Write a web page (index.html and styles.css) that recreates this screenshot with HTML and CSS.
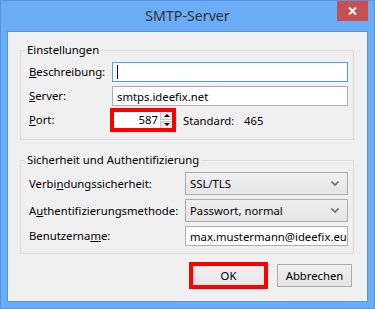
FILE: index.html
```html
<!DOCTYPE html>
<html lang="de">
  <head>
    <meta charset="UTF-8" />
    <title>SMTP-Server</title>
    <link rel="stylesheet" href="styles.css">
  </head>
  <body>
    <div class="window">
      <div class="titlebar">
        <span class="title">SMTP-Server</span>
        <button class="close" title="Schließen">
          <svg width="9" height="8" viewBox="0 0 9 8">
            <path d="M1 0.5 L8 7.5 M8 0.5 L1 7.5" stroke="#fff" stroke-width="2" />
          </svg>
        </button>
      </div>

      <div class="client">
        <!-- Einstellungen -->
        <fieldset class="group">
          <legend>Einstellungen</legend>
          <div class="form form-general">
            <label><u>B</u>eschreibung:</label>
            <div class="field focused"><span class="caret"></span></div>

            <label><u>S</u>erver:</label>
            <div class="field">smtps.ideefix.net</div>

            <label><u>P</u>ort:</label>
            <div class="port-row">
              <div class="port highlight">
                <div class="port-input">587</div>
                <div class="spinner">
                  <span class="spin-btn"><span class="arrow-up"></span></span>
                  <span class="spin-btn"><span class="arrow-down"></span></span>
                </div>
              </div>
              <span class="std-label">Standard:</span>
              <span>465</span>
            </div>
          </div>
        </fieldset>

        <!-- Sicherheit -->
        <fieldset class="group group-security">
          <legend>Sicherheit und Authentifizierung</legend>
          <div class="form form-security">
            <label>Verbi<u>n</u>dungssicherheit:</label>
            <div class="combo">
              <span>SSL/TLS</span>
              <svg width="8" height="5" viewBox="0 0 8 5">
                <path d="M0.5 0.5 L4 4 L7.5 0.5" fill="none" stroke="#6d6d6d" stroke-width="1.6" />
              </svg>
            </div>

            <label>A<u>u</u>thentifizierungsmethode:</label>
            <div class="combo">
              <span>Passwort, normal</span>
              <svg width="8" height="5" viewBox="0 0 8 5">
                <path d="M0.5 0.5 L4 4 L7.5 0.5" fill="none" stroke="#6d6d6d" stroke-width="1.6" />
              </svg>
            </div>

            <label>Benutzerna<u>m</u>e:</label>
            <div class="field">max.mustermann@ideefix.eu</div>
          </div>
        </fieldset>

        <div class="buttons">
          <button class="btn highlight">OK</button>
          <button class="btn">Abbrechen</button>
        </div>
      </div>
    </div>
  </body>
</html>
```

FILE: styles.css
```css
/* Basic page styling */
body {
  margin: 0;
  font-family: "Segoe UI", "Noto Sans", "Open Sans", sans-serif;
  font-size: 11.3px;
  color: #000;
}

/* Window frame */
.window {
  width: 375px;
  height: 309px;
  box-sizing: border-box;
  background-color: #6aacf5;
  border: 1px solid #5494e0;
  display: flex;
  flex-direction: column;
}

.titlebar {
  height: 30px;
  position: relative;
  display: flex;
  align-items: center;
  justify-content: center;
}

.title {
  font-size: 14.2px;
  color: #333;
  line-height: 20px;
  margin-top: -1px;
}

.close {
  position: absolute;
  top: 0;
  right: 6px;
  width: 31px;
  height: 20px;
  padding: 0;
  border: 0;
  background-color: #c75050;
  display: flex;
  align-items: center;
  justify-content: center;
}

/* Client area */
.client {
  flex: 1;
  margin: 0 6px 6px;
  background-color: #f0f0f0;
  border: 1px solid #5a92d6;
}

/* Group boxes */
.group {
  margin: 10px 13px 0 12px;
  padding: 4px 5px 9px 8px;
  border: 1px solid #dcdcdc;
  min-width: 0;
}

.group legend {
  margin-left: -4px;
  padding: 0 2px;
  line-height: 16px;
}

.group-security {
  margin-top: 12px;
  padding-bottom: 7px;
}

/* Form rows */
.form {
  display: grid;
  grid-template-columns: 83px 1fr;
  row-gap: 4px;
  align-items: center;
}

.form-security {
  grid-template-columns: 156px 1fr;
  grid-template-rows: 23px 23px 20px;
}

.form label {
  line-height: 16px;
  white-space: nowrap;
}

.field {
  height: 20px;
  box-sizing: border-box;
  border: 1px solid #abadb3;
  background-color: #fff;
  padding: 0 4px;
  line-height: 17px;
  white-space: nowrap;
  overflow: hidden;
  display: flex;
  align-items: center;
}

.field.focused {
  border-color: #569de5;
}

.caret {
  width: 1px;
  height: 14px;
  background-color: #000;
}

/* Port with spinner */
.port-row {
  display: flex;
  align-items: center;
  height: 20px;
}

.port {
  display: flex;
  height: 20px;
  width: 62px;
  box-sizing: border-box;
  border: 1px solid #abadb3;
  background-color: #fff;
}

.port-input {
  flex: 1;
  text-align: right;
  padding-right: 2px;
  line-height: 18px;
}

.spinner {
  width: 13px;
  display: flex;
  flex-direction: column;
  gap: 1px;
}

.spin-btn {
  flex: 1;
  background-color: #e8e8e8;
  border: 1px solid #c4c4c4;
  display: flex;
  align-items: center;
  justify-content: center;
}

.arrow-up,
.arrow-down {
  width: 0;
  height: 0;
  border-left: 3px solid transparent;
  border-right: 3px solid transparent;
}

.arrow-up {
  border-bottom: 3px solid #000;
}

.arrow-down {
  border-top: 3px solid #000;
}

.std-label {
  margin-left: 9px;
  width: 61px;
}

/* Combo boxes */
.combo {
  height: 23px;
  box-sizing: border-box;
  border: 1px solid #acacac;
  background: linear-gradient(#f0f0f0, #e5e5e5);
  padding: 0 8px 0 4px;
  display: flex;
  align-items: center;
  justify-content: space-between;
}

/* Buttons */
.buttons {
  display: flex;
  justify-content: flex-end;
  gap: 11px;
  margin: 10px 15px 0 0;
}

.btn {
  width: 75px;
  height: 23px;
  border: 1px solid #acacac;
  background: linear-gradient(#f0f0f0, #e5e5e5);
  font: inherit;
  color: #000;
  padding: 0;
}

/* Red markers around fields */
.highlight {
  outline: 4px solid #ff0000;
  outline-offset: -2px;
}
```
